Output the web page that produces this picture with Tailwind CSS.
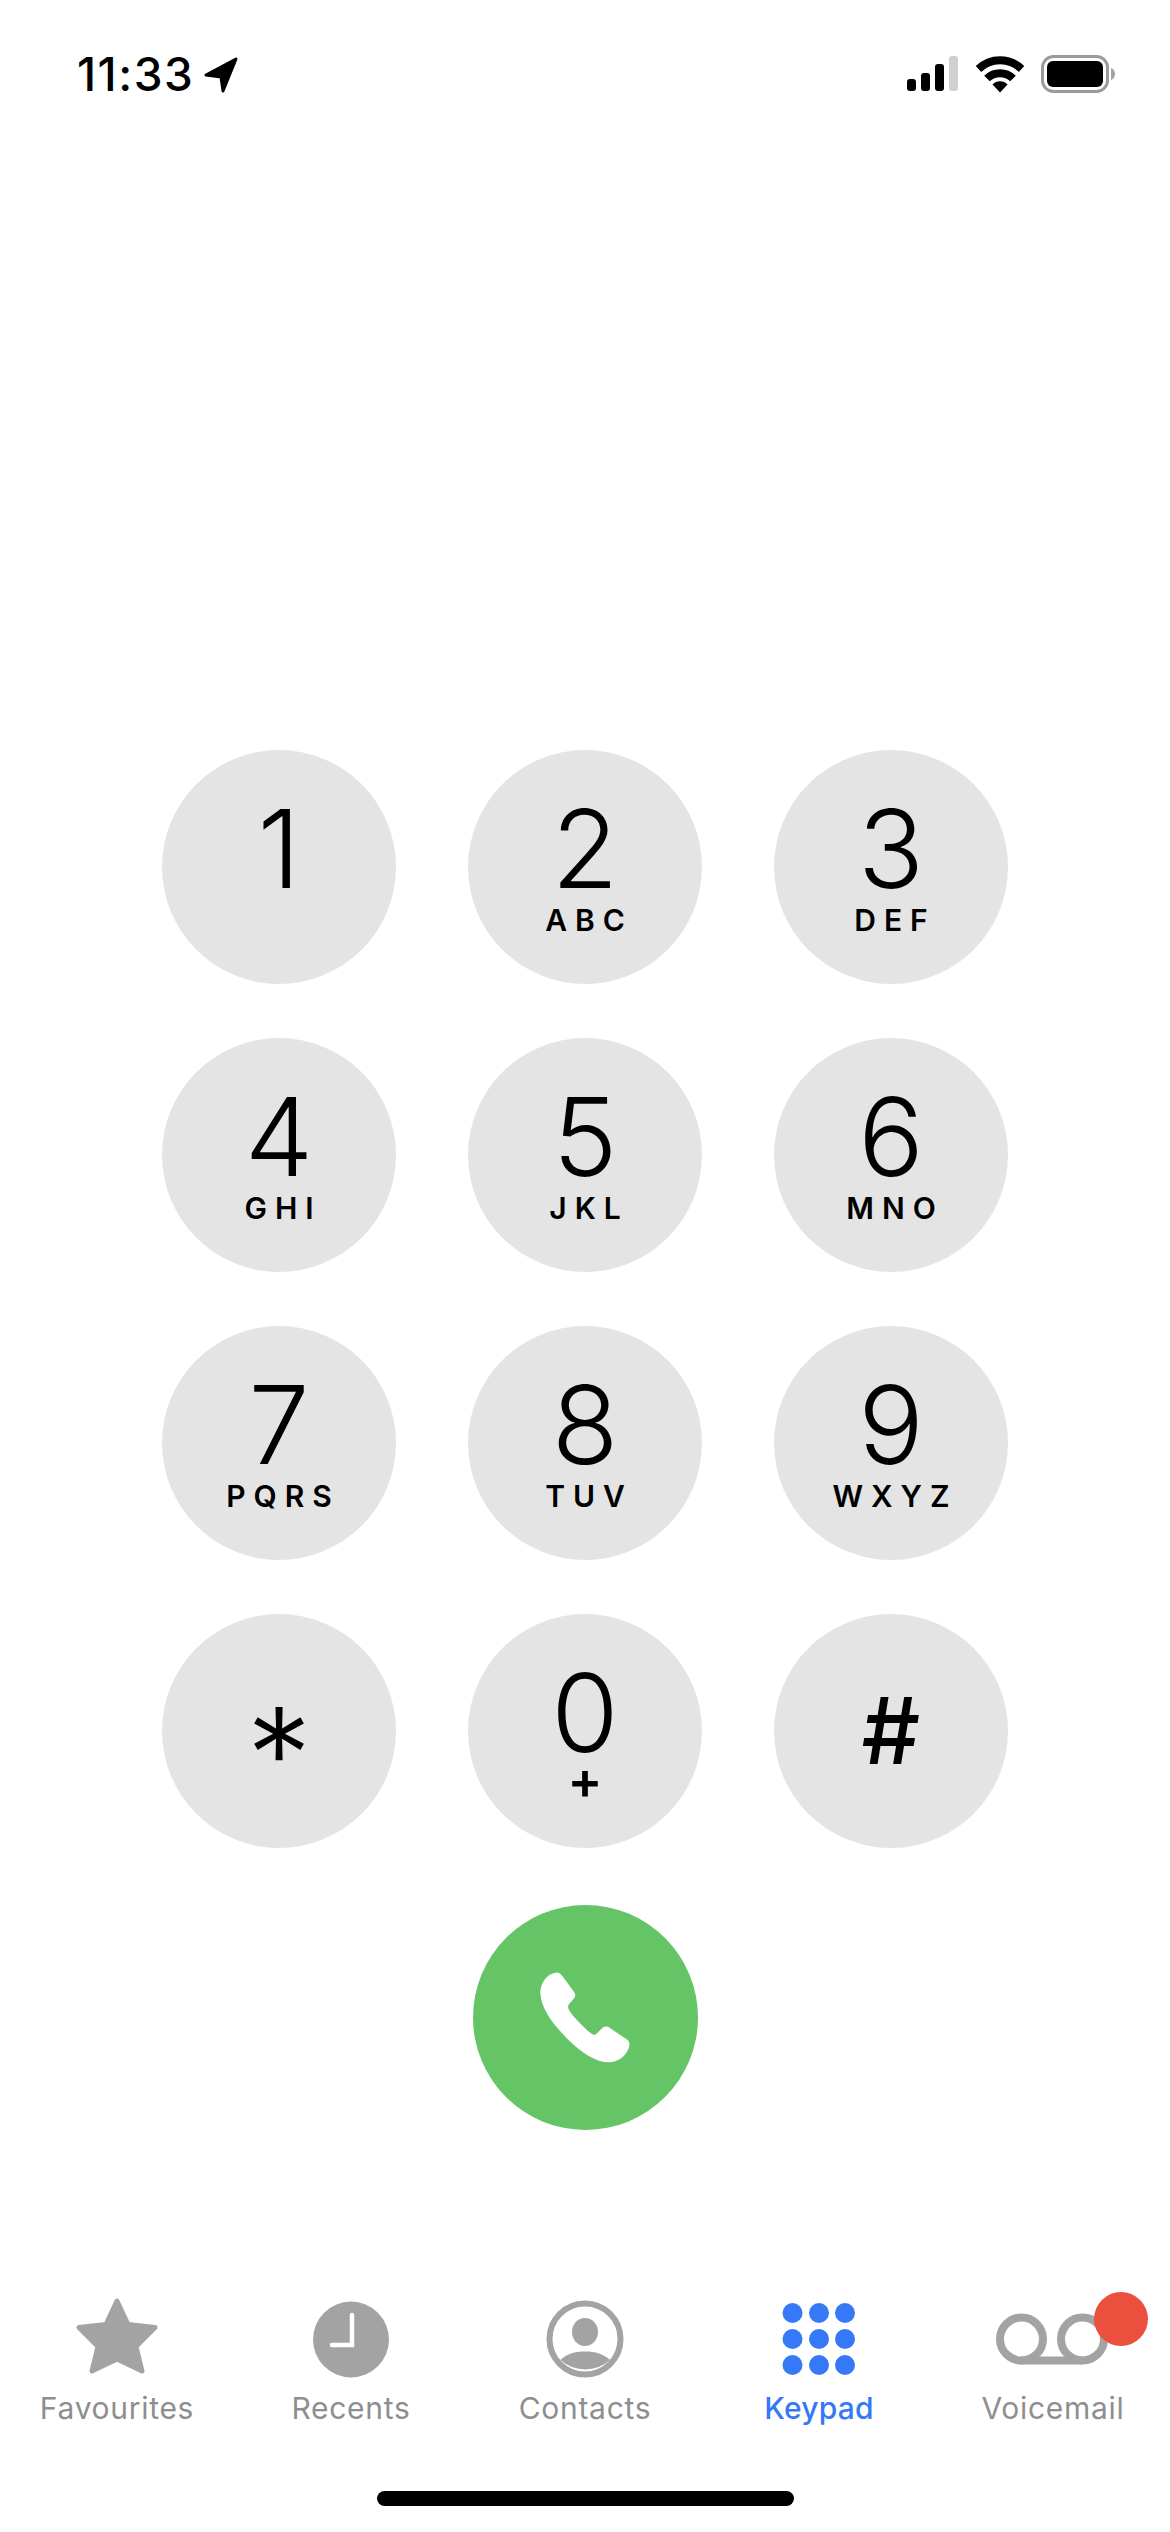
<!doctype html>
<html>
<head>
<meta charset="utf-8">
<script src="https://cdn.jsdelivr.net/npm/@tailwindcss/browser@4"></script>
</head>
<body>
<div class="relative flex h-[2532px] w-[1170px] flex-col overflow-hidden bg-white font-['Inter',sans-serif] text-black">
  <!-- status bar -->
  <header class="flex h-[750px] items-start justify-between pl-[77px] pr-[53px] pt-[49px]">
    <div class="flex items-center gap-[9px]">
      <span class="text-[46px] font-medium leading-[50px] tracking-[1.5px]">11:33</span>
      <svg class="h-[50px] w-[40px]" viewBox="0 0 40 50"><path d="M33 10 L3 26 L18 28 L20 42 Z" fill="#000" stroke="#000" stroke-width="3" stroke-linejoin="round"/></svg>
    </div>
    <div class="flex items-start gap-[16px] pt-[6px]">
      <svg class="h-[37px] w-[52px]" viewBox="0 0 52 37">
        <rect x="0" y="24" width="9" height="12" rx="3" fill="#000"/>
        <rect x="14" y="18" width="9" height="18" rx="3" fill="#000"/>
        <rect x="28" y="9" width="9" height="27" rx="3" fill="#000"/>
        <rect x="42" y="1" width="9" height="35" rx="3" fill="#d0d0d0"/>
      </svg>
      <svg class="h-[38px] w-[50px]" viewBox="0 0 50 38" fill="none" stroke="#000">
        <path d="M3.5 14 A31 31 0 0 1 46.5 14" stroke-width="8"/>
        <path d="M12 23.5 A18.5 18.5 0 0 1 38 23.5" stroke-width="8"/>
        <path d="M25 37.5 L17.5 29.5 A10.5 10.5 0 0 1 32.5 29.5 Z" fill="#000" stroke="none"/>
      </svg>
      <svg class="h-[38px] w-[76px]" viewBox="0 0 76 38">
        <rect x="1.5" y="1.5" width="65" height="35" rx="11" fill="none" stroke="#9a9a9a" stroke-width="3"/>
        <rect x="6" y="6" width="56" height="26" rx="6" fill="#000"/>
        <path d="M70 13 C73 14 74 16.5 74 19 C74 21.5 73 24 70 25 Z" fill="#a3a3a3"/>
      </svg>
    </div>
  </header>

  <!-- keypad -->
  <main class="grid grid-cols-[234px_234px_234px] justify-center gap-x-[72px] gap-y-[54px]">
    <div class="flex h-[234px] w-[234px] flex-col items-center rounded-full bg-[#e4e4e4] pt-[44px]"><span class="text-[109px] font-[350] leading-[108px]">1</span></div>
    <div class="flex h-[234px] w-[234px] flex-col items-center rounded-full bg-[#e4e4e4] pt-[44px]"><span class="text-[109px] font-[350] leading-[108px]">2</span><span class="mt-[3px] pl-[8px] text-[30px] font-semibold leading-[30px] tracking-[8px]">ABC</span></div>
    <div class="flex h-[234px] w-[234px] flex-col items-center rounded-full bg-[#e4e4e4] pt-[44px]"><span class="text-[109px] font-[350] leading-[108px]">3</span><span class="mt-[3px] pl-[8px] text-[30px] font-semibold leading-[30px] tracking-[8px]">DEF</span></div>
    <div class="flex h-[234px] w-[234px] flex-col items-center rounded-full bg-[#e4e4e4] pt-[44px]"><span class="text-[109px] font-[350] leading-[108px]">4</span><span class="mt-[3px] pl-[8px] text-[30px] font-semibold leading-[30px] tracking-[8px]">GHI</span></div>
    <div class="flex h-[234px] w-[234px] flex-col items-center rounded-full bg-[#e4e4e4] pt-[44px]"><span class="text-[109px] font-[350] leading-[108px]">5</span><span class="mt-[3px] pl-[8px] text-[30px] font-semibold leading-[30px] tracking-[8px]">JKL</span></div>
    <div class="flex h-[234px] w-[234px] flex-col items-center rounded-full bg-[#e4e4e4] pt-[44px]"><span class="text-[109px] font-[350] leading-[108px]">6</span><span class="mt-[3px] pl-[8px] text-[30px] font-semibold leading-[30px] tracking-[8px]">MNO</span></div>
    <div class="flex h-[234px] w-[234px] flex-col items-center rounded-full bg-[#e4e4e4] pt-[44px]"><span class="text-[109px] font-[350] leading-[108px]">7</span><span class="mt-[3px] pl-[8px] text-[30px] font-semibold leading-[30px] tracking-[8px]">PQRS</span></div>
    <div class="flex h-[234px] w-[234px] flex-col items-center rounded-full bg-[#e4e4e4] pt-[44px]"><span class="text-[109px] font-[350] leading-[108px]">8</span><span class="mt-[3px] pl-[8px] text-[30px] font-semibold leading-[30px] tracking-[8px]">TUV</span></div>
    <div class="flex h-[234px] w-[234px] flex-col items-center rounded-full bg-[#e4e4e4] pt-[44px]"><span class="text-[109px] font-[350] leading-[108px]">9</span><span class="mt-[3px] pl-[8px] text-[30px] font-semibold leading-[30px] tracking-[8px]">WXYZ</span></div>
    <div class="flex h-[234px] w-[234px] items-center justify-center overflow-hidden rounded-full bg-[#e4e4e4]"><span class="translate-y-[24px] text-[130px] font-light leading-[130px]">*</span></div>
    <div class="flex h-[234px] w-[234px] flex-col items-center rounded-full bg-[#e4e4e4] pt-[44px]"><span class="text-[109px] font-[350] leading-[108px]">0</span><span class="-mt-[3px] text-[52px] font-semibold leading-[36px]">+</span></div>
    <div class="flex h-[234px] w-[234px] items-center justify-center rounded-full bg-[#e4e4e4]"><span class="text-[92px] font-medium leading-[90px]">#</span></div>
  </main>

  <!-- call button -->
  <div class="mt-[57px] flex justify-center">
    <div class="flex h-[225px] w-[225px] items-center justify-center rounded-full bg-[#65c466]">
      <svg class="h-[93px] w-[92px]" viewBox="300 275 275 278"><path d="M350 280 C358 279 364 282 370 290 L405 338 C410 346 409 352 404 358 L390 374 C386 379 386 386 390 392 C402 412 440 450 458 463 C464 467 469 466 474 460 L490 445 C497 440 503 440 510 444 L563 480 C572 487 572 497 567 508 C558 530 535 548 510 548 C470 548 425 518 385 478 C340 432 305 385 304 340 C304 310 325 282 350 280 Z" fill="#fff"/></svg>
    </div>
  </div>

  <!-- tab bar -->
  <nav class="mt-[162px] grid grid-cols-5">
    <div class="flex flex-col items-center">
      <svg class="h-[92px] w-[130px]" viewBox="0 0 130 92"><path d="M65 9 L76 32.5 L103 35.5 L84 54.6 L90 79 L65 67 L40 79 L46 54.6 L27 35.5 L54 32.5 Z" fill="#a3a3a3" stroke="#a3a3a3" stroke-width="5" stroke-linejoin="round"/></svg>
      <span class="mt-[6px] text-[30px] leading-[36px] tracking-[0.7px] text-[#8e8e8e]">Favourites</span>
    </div>
    <div class="flex flex-col items-center">
      <svg class="h-[92px] w-[130px]" viewBox="0 0 130 92"><circle cx="65" cy="47.5" r="38" fill="#a3a3a3"/><path d="M66 23 V53 H46" fill="none" stroke="#fff" stroke-width="4.5" stroke-linecap="round"/></svg>
      <span class="mt-[6px] text-[30px] leading-[36px] tracking-[0.7px] text-[#8e8e8e]">Recents</span>
    </div>
    <div class="flex flex-col items-center">
      <svg class="h-[92px] w-[130px]" viewBox="0 0 130 92"><circle cx="65" cy="47" r="35.5" fill="none" stroke="#a3a3a3" stroke-width="6"/><ellipse cx="65" cy="40" rx="13" ry="14" fill="#a3a3a3"/><path d="M40.5 68 C46 62 55 59.5 65 59.5 C75 59.5 84 62 90 68 A37 37 0 0 1 40.5 68 Z" fill="#a3a3a3"/></svg>
      <span class="mt-[6px] text-[30px] leading-[36px] tracking-[0.7px] text-[#8e8e8e]">Contacts</span>
    </div>
    <div class="flex flex-col items-center">
      <svg class="h-[92px] w-[130px]" viewBox="0 0 130 92" fill="#3579f6"><circle cx="38.5" cy="21" r="10"/><circle cx="65" cy="21" r="10"/><circle cx="91" cy="21" r="10"/><circle cx="38.5" cy="47" r="10"/><circle cx="65" cy="47" r="10"/><circle cx="91" cy="47" r="10"/><circle cx="38.5" cy="73" r="10"/><circle cx="65" cy="73" r="10"/><circle cx="91" cy="73" r="10"/></svg>
      <span class="mt-[6px] text-[30px] font-medium leading-[36px] tracking-[0.2px] text-[#3579f6]">Keypad</span>
    </div>
    <div class="relative flex flex-col items-center">
      <svg class="h-[92px] w-[130px]" viewBox="0 0 130 92" fill="none" stroke="#a3a3a3" stroke-width="8"><circle cx="33.5" cy="47" r="21.5"/><circle cx="94.5" cy="47" r="21.5"/><path d="M33.5 68.5 H94.5"/></svg>
      <span class="mt-[6px] text-[30px] leading-[36px] tracking-[0.7px] text-[#8e8e8e]">Voicemail</span>
      <span class="absolute left-[158px] top-0 h-[54px] w-[54px] rounded-full bg-[#eb4f3d]"></span>
    </div>
  </nav>

  <!-- home indicator -->
  <div class="mt-[65px] flex justify-center">
    <div class="h-[15px] w-[417px] rounded-full bg-black"></div>
  </div>
</div>
</body>
</html>
